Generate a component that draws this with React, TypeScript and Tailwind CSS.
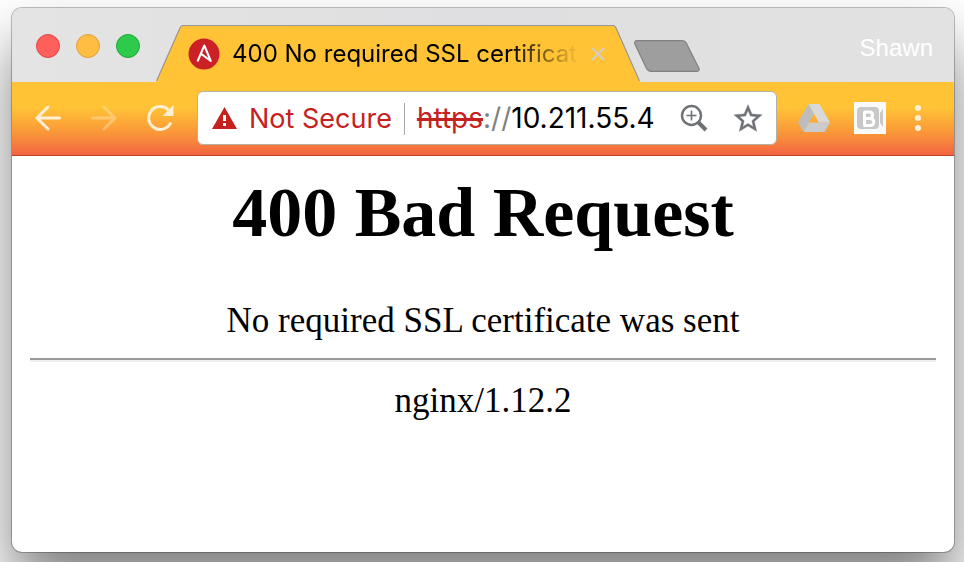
import type { ReactNode } from "react";

function ToolbarButton({ label, children }: { label: string; children: ReactNode }) {
  return (
    <button
      type="button"
      aria-label={label}
      className="flex h-10 w-10 shrink-0 items-center justify-center"
    >
      {children}
    </button>
  );
}

function TabEdge({ flip = false }: { flip?: boolean }) {
  return (
    <svg
      viewBox="0 0 27 57"
      className={flip ? "h-[57px] w-[27px] shrink-0 -scale-x-100" : "h-[57px] w-[27px] shrink-0"}
      aria-hidden="true"
    >
      <path d="M0 57 L23 4 Q25 .5 27 .5 V57 Z" fill="#ffc335" />
      <path d="M.5 56 L24 3 Q25.200 .5 27 .5" fill="none" stroke="#979797" strokeWidth="1.200" />
    </svg>
  );
}

function TabStrip() {
  return (
    <div className="flex h-[74px] items-end bg-linear-to-r from-[#e4e4e4] via-[#dfdfe1] to-[#e2e2e2] pl-6">
      <div className="mr-4 flex h-[74px] shrink-0 items-center gap-4 pt-0.5">
        <button type="button" aria-label="Close window" className="h-6 w-6 rounded-full border border-[#e2474a] bg-[#ff605c]" />
        <button type="button" aria-label="Minimise window" className="h-6 w-6 rounded-full border border-[#dfa03a] bg-[#ffbd44]" />
        <button type="button" aria-label="Zoom window" className="h-6 w-6 rounded-full border border-[#1fa83c] bg-[#2dca4c]" />
      </div>
      <div className="flex w-[484px] min-w-0">
        <TabEdge />
        <div className="flex h-[57px] min-w-0 flex-1 items-center gap-3 border-t border-[#979797] bg-[#ffc335] pr-2 pl-[5px]">
          <svg viewBox="0 0 32 32" className="h-8 w-8 shrink-0" aria-hidden="true">
            <circle cx="16" cy="16" r="15.500" fill="#cb2026" />
            <path d="M9.500 23.500 L16.300 7.500 L22.800 23 L12.800 15.600" fill="none" stroke="#fff" strokeWidth="2" strokeLinejoin="round" />
          </svg>
          <span className="min-w-0 flex-1 overflow-hidden text-2xl whitespace-nowrap text-black [mask-image:linear-gradient(to_right,black_80%,transparent)]">
            400 No required SSL certificate
          </span>
          <button type="button" aria-label="Close tab" className="shrink-0">
            <svg viewBox="0 0 14 14" className="h-[14px] w-[14px]">
              <path d="M1 1 L13 13 M13 1 L1 13" stroke="#d3cdbc" strokeWidth="2.400" />
            </svg>
          </button>
        </div>
        <TabEdge flip />
      </div>
      <button type="button" aria-label="New tab" className="-ml-1.5 shrink-0 pb-[10px]">
        <svg viewBox="0 0 66 32" className="h-8 w-[66px]">
          <path d="M3 .7 H48 Q51 .7 52.500 3.500 L64.800 28 Q66 31.300 63 31.300 H17 Q14 31.300 12.500 28.500 L.9 4 Q0 .7 3 .7 Z" fill="#9e9e9e" stroke="#808080" strokeWidth="1.200" />
        </svg>
      </button>
      <button type="button" className="mr-[21px] mb-[18px] ml-auto font-['Liberation_Sans',sans-serif] text-2xl text-white">
        Shawn
      </button>
    </div>
  );
}

function AddressBar() {
  return (
    <div className="mx-[17px] flex h-[54px] min-w-0 flex-1 items-center rounded-md border border-[#b5b0a8] bg-white px-[14px] text-[28px] whitespace-nowrap">
      <svg viewBox="0 0 25 22" className="mr-3 h-[22px] w-[25px] shrink-0" aria-hidden="true">
        <path d="M12.500 0 L25 22 H0 Z" fill="#c5221f" />
        <path d="M11 8 h3 v6 h-3 Z M11 16 h3 v3 h-3 Z" fill="#fff" />
      </svg>
      <div className="flex min-w-0 flex-1 items-baseline pt-0.5">
        <span className="text-[27px] text-[#c5221f]">Not Secure</span>
        <span className="mx-3 h-8 w-px shrink-0 self-center bg-[#a8a8a8]" />
        <div
          role="textbox"
          aria-label="Address"
          contentEditable
          suppressContentEditableWarning
          className="min-w-0 flex-1 text-black outline-none"
        >
          <span className="text-[#c5221f] line-through decoration-[3px]">https</span>
          <span className="text-[#808080]">://</span>
          <span>10.211.55.4</span>
        </div>
      </div>
      <button type="button" aria-label="Page zoom" className="mr-[26px] shrink-0">
        <svg viewBox="0 0 28 28" className="h-7 w-7" fill="none" stroke="#6e7276">
          <circle cx="11.500" cy="11.500" r="9.500" strokeWidth="2.400" />
          <path d="M11.500 6.500 V16.500 M6.500 11.500 H16.500" strokeWidth="1.600" />
          <path d="M18 18 L26 26" strokeWidth="4" />
        </svg>
      </button>
      <button type="button" aria-label="Bookmark this page" className="shrink-0">
        <svg viewBox="2 2 20 19" className="h-7 w-7">
          <path
            fill="#6e7276"
            stroke="#6e7276"
            strokeWidth=".3"
            d="M22 9.240l-7.190-.62L12 2 9.190 8.630 2 9.240l5.460 4.730L5.820 21 12 17.270 18.180 21l-1.630-7.030L22 9.240zM12 15.400l-3.760 2.270 1-4.280-3.320-2.880 4.380-.38L12 6.100l1.710 4.040 4.380.38-3.320 2.880 1 4.280L12 15.400z"
          />
        </svg>
      </button>
    </div>
  );
}

function Toolbar() {
  return (
    <div className="flex h-[74px] items-center border-b border-[#bf452c] bg-linear-to-b from-[#ffc335] from-35% via-[#f99339] via-72% to-[#f26340] px-4 pb-0.5">
      <div className="flex gap-4">
        <ToolbarButton label="Back">
          <svg viewBox="0 0 28 28" className="h-7 w-7" fill="none" stroke="#fff0d5" strokeWidth="3" strokeLinecap="round">
            <path d="M25.500 14 H3 M14 3 L3 14 L14 25" />
          </svg>
        </ToolbarButton>
        <ToolbarButton label="Forward">
          <svg viewBox="0 0 28 28" className="h-7 w-7" fill="none" stroke="#fff0d5" strokeWidth="3" strokeLinecap="round" opacity=".35">
            <path d="M2.500 14 H25 M14 3 L25 14 L14 25" />
          </svg>
        </ToolbarButton>
        <ToolbarButton label="Reload">
          <svg viewBox="0 0 28 28" className="h-7 w-7">
            <path d="M22.500 6 A11.500 11.500 0 1 0 24.800 18.500" fill="none" stroke="#fff0d5" strokeWidth="3" />
            <path d="M27.500 1 V12 H16.500 Z" fill="#fff0d5" />
          </svg>
        </ToolbarButton>
      </div>
      <AddressBar />
      <div className="mr-2 flex gap-4">
        <ToolbarButton label="Google Drive">
          <svg viewBox="0 0 32 28" className="h-7 w-8">
            <path d="M10.500 0 L16 9.500 L5.500 28 L0 18.500 Z" fill="#bdbdbd" />
            <path d="M10.500 0 H21.500 L32 18.500 H21 Z" fill="#d9d9d9" />
            <path d="M11 18.500 H32 L26.500 28 H5.500 Z" fill="#cbcbcb" />
          </svg>
        </ToolbarButton>
        <ToolbarButton label="Screen recorder">
          <svg viewBox="0 0 32 32" className="h-8 w-8">
            <path d="M0 0 H32 V32 H0 Z" fill="#f9f9f9" />
            <rect x="3" y="5" width="22" height="22" rx="4" fill="#c8c8c8" />
            <path d="M26 11 L29 7 V25 L26 21 Z" fill="#c8c8c8" />
            <path d="M9.500 10 H15.500 Q18.500 10 18.500 13 Q18.500 16.500 15.500 16.500 H10 M15.500 16.500 Q19.800 16.500 19.800 20 Q19.800 23.500 15.500 23.500 H9.500 M10.500 10 V23.500" fill="none" stroke="#fff" strokeWidth="3" />
          </svg>
        </ToolbarButton>
      </div>
      <ToolbarButton label="Menu">
        <svg viewBox="0 0 6 26" className="h-[26px] w-[6px]" fill="#fff0d5">
          <circle cx="3" cy="3" r="3" />
          <circle cx="3" cy="13" r="3" />
          <circle cx="3" cy="23" r="3" />
        </svg>
      </ToolbarButton>
    </div>
  );
}

export default function App() {
  return (
    <div className="flex min-h-screen flex-col overflow-hidden bg-white pt-2 pr-[10px] pb-[10px] pl-3 font-[Inter,sans-serif]">
      <div className="flex flex-1 flex-col overflow-hidden rounded-[10px] bg-white shadow-[0_0_0_1px_rgba(0,0,0,0.25),0_36px_60px_rgba(0,0,0,0.5)]">
        <TabStrip />
        <Toolbar />
        <main className="px-[18px] pt-[17px] text-center font-['Liberation_Serif',serif] text-[35px] leading-[42px] text-black">
          <h1 className="mb-[47px] text-[70px] leading-[80px] font-bold">400 Bad Request</h1>
          <p>No required SSL certificate was sent</p>
          <hr className="mt-4 mb-[18px] border-t-2 border-b-2 border-t-[#9a9a9a] border-b-[#eeeeee]" />
          <p>nginx/1.12.2</p>
        </main>
      </div>
    </div>
  );
}
